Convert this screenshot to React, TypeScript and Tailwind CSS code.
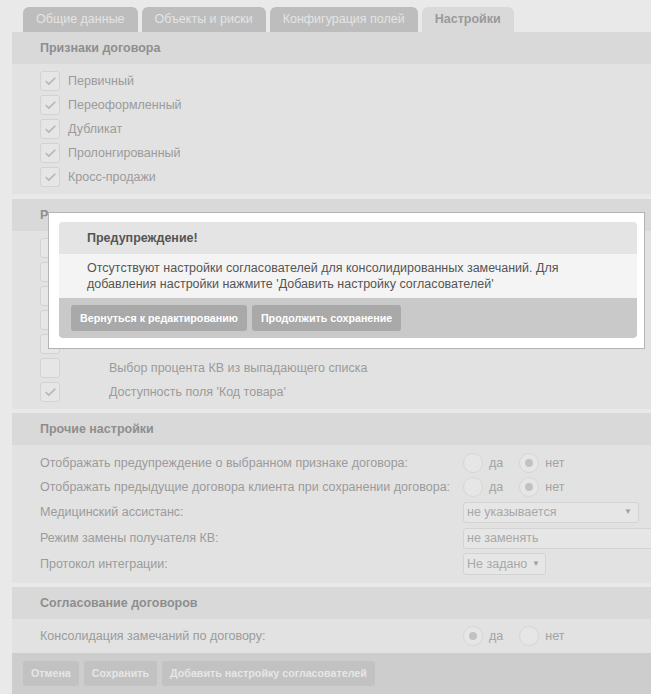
import { Check } from "lucide-react";

const tabs = ["Общие данные", "Объекты и риски", "Конфигурация полей"];
const signs = ["Первичный", "Переоформленный", "Дубликат", "Пролонгированный", "Кросс-продажи"];
// first five rows sit under the dialog
const perms = [
  { label: "", on: false },
  { label: "", on: false },
  { label: "", on: false },
  { label: "", on: false },
  { label: "", on: false },
  { label: "Выбор процента КВ из выпадающего списка", on: false },
  { label: "Доступность поля 'Код товара'", on: true },
];

function Box({ on }: { on: boolean }) {
  return (
    <span className="flex h-5 w-5 shrink-0 items-center justify-center rounded-[3px] border border-[#d3d3d3] bg-[#e6e6e6]">
      {on && <Check size={13} strokeWidth={3.2} className="text-[#b7b7b7]" />}
    </span>
  );
}

function Radio({ on, label }: { on: boolean; label: string }) {
  return (
    <span className="flex items-center">
      <span className="flex h-5 w-5 items-center justify-center rounded-full border border-[#d6d6d6] bg-[#e6e6e6]">
        {on && <span className="h-2 w-2 rounded-full bg-[#c2c2c2]" />}
      </span>
      <span className="ml-[6px] text-[#a3a3a3]">{label}</span>
    </span>
  );
}

function Section({ title, children, className }: { title: string; children: React.ReactNode; className?: string }) {
  return (
    <section className={className}>
      <div className="flex h-8 items-center bg-[#d9d9d9] pl-7 font-bold text-[#8e8e8e]">{title}</div>
      <div className="bg-[#e2e2e2]">{children}</div>
    </section>
  );
}

function Btn({ children, dark }: { children: React.ReactNode; dark?: boolean }) {
  return (
    <button
      className={
        dark
          ? "h-[26px] rounded-[3px] bg-[#a9a9a9] px-[9px] text-[10.7px] font-bold text-white"
          : "h-[25px] rounded-[3px] bg-[#c2c2c2] px-[8px] text-[10.7px] font-bold text-[#e6e6e6]"
      }
    >
      {children}
    </button>
  );
}

export default function App() {
  return (
    <div className="relative h-[694px] w-[651px] overflow-hidden bg-[#e9e9e9] text-[12.5px] text-[#9b9b9b] [font-family:'Liberation_Sans',Arial,sans-serif]">
      <div className="ml-3 w-[660px] pt-[7px]">
        <div className="flex gap-1 pl-[11px]">
          {tabs.map((t) => (
            <div key={t} className="flex h-[25px] items-center rounded-t-[6px] bg-[#bdbdbd] px-[13px] text-[#e4e4e4]">
              {t}
            </div>
          ))}
          <div className="flex h-[25px] items-center rounded-t-[6px] bg-[#d9d9d9] px-[13px] font-bold text-[#9a9a9a]">Настройки</div>
        </div>

        <Section title="Признаки договора">
          <div className="px-7 pb-[5px] pt-[5px]">
            {signs.map((s) => (
              <div key={s} className="flex h-6 items-center gap-2">
                <Box on />
                <span>{s}</span>
              </div>
            ))}
          </div>
        </Section>

        <Section title="Разрешения" className="mt-[5px]">
          <div className="px-7 pb-[5px] pt-[5px]">
            {perms.map((p, i) => (
              <div key={i} className="flex h-6 items-center">
                <span className="w-[69px]">
                  <Box on={p.on} />
                </span>
                <span>{p.label}</span>
              </div>
            ))}
          </div>
        </Section>

        <Section title="Прочие настройки" className="mt-[4px]">
          <div className="pb-[6px] pl-7 pt-[6px]">
            <div className="grid grid-cols-[423px_1fr]">
              <div className="flex h-6 items-center">Отображать предупреждение о выбранном признаке договора:</div>
              <div className="flex h-6 items-center gap-[16px]">
                <Radio on={false} label="да" />
                <Radio on label="нет" />
              </div>
              <div className="flex h-6 items-center">Отображать предыдущие договора клиента при сохранении договора:</div>
              <div className="flex h-6 items-center gap-[16px]">
                <Radio on={false} label="да" />
                <Radio on label="нет" />
              </div>
              <div className="flex h-[26px] items-center">Медицинский ассистанс:</div>
              <div className="flex h-[26px] items-center">
                <div className="flex h-[21px] w-[176px] items-center justify-between rounded-[3px] border border-[#d3d3d3] bg-[#e6e6e6] pl-[3px] pr-[6px] text-[#a8a8a8]">
                  <span>не указывается</span>
                  <span className="text-[8px] text-[#a0a0a0]">▼</span>
                </div>
              </div>
              <div className="flex h-[26px] items-center">Режим замены получателя КВ:</div>
              <div className="flex h-[26px] items-center">
                <div className="flex h-[21px] w-[220px] items-center rounded-[3px] border border-[#d3d3d3] bg-[#e6e6e6] pl-[3px] text-[#a8a8a8]">не заменять</div>
              </div>
              <div className="flex h-[26px] items-center">Протокол интеграции:</div>
              <div className="flex h-[26px] items-center">
                <div className="flex h-[22px] w-[83px] items-center justify-between rounded-[3px] border border-[#d3d3d3] bg-[#e6e6e6] pl-[3px] pr-[5px] text-[#a8a8a8]">
                  <span>Не задано</span>
                  <span className="text-[8px] text-[#a0a0a0]">▼</span>
                </div>
              </div>
            </div>
          </div>
        </Section>

        <Section title="Согласование договоров" className="mt-[4px]">
          <div className="grid grid-cols-[423px_1fr] pb-[5px] pl-7 pt-[5px]">
            <div className="flex h-6 items-center">Консолидация замечаний по договору:</div>
            <div className="flex h-6 items-center gap-[16px]">
              <Radio on label="да" />
              <Radio on={false} label="нет" />
            </div>
          </div>
        </Section>

        <div className="flex h-[60px] items-start gap-[5px] bg-[#cdcdcd] pl-[11px] pt-2">
          <Btn>Отмена</Btn>
          <Btn>Сохранить</Btn>
          <Btn>Добавить настройку согласователей</Btn>
        </div>
      </div>

      <div className="absolute left-[48px] top-[212px] w-[597px] border border-[#b3b3b3] bg-white pb-[10px] pl-[10px] pr-[7px] pt-[9px] text-[12.5px] text-[#555]">
        <div className="overflow-hidden rounded-[4px]">
          <div className="flex h-8 items-center bg-[#e4e4e4] pl-7 font-bold">Предупреждение!</div>
          <div className="bg-[#f4f4f4] py-[6px] pl-7 pr-7 leading-4">
            Отсутствуют настройки согласователей для консолидированных замечаний. Для добавления настройки нажмите 'Добавить настройку согласователей'
          </div>
          <div className="flex h-10 items-start gap-[5px] bg-[#c9c9c9] pl-3 pt-[7px]">
            <Btn dark>Вернуться к редактированию</Btn>
            <Btn dark>Продолжить сохранение</Btn>
          </div>
        </div>
      </div>
    </div>
  );
}
